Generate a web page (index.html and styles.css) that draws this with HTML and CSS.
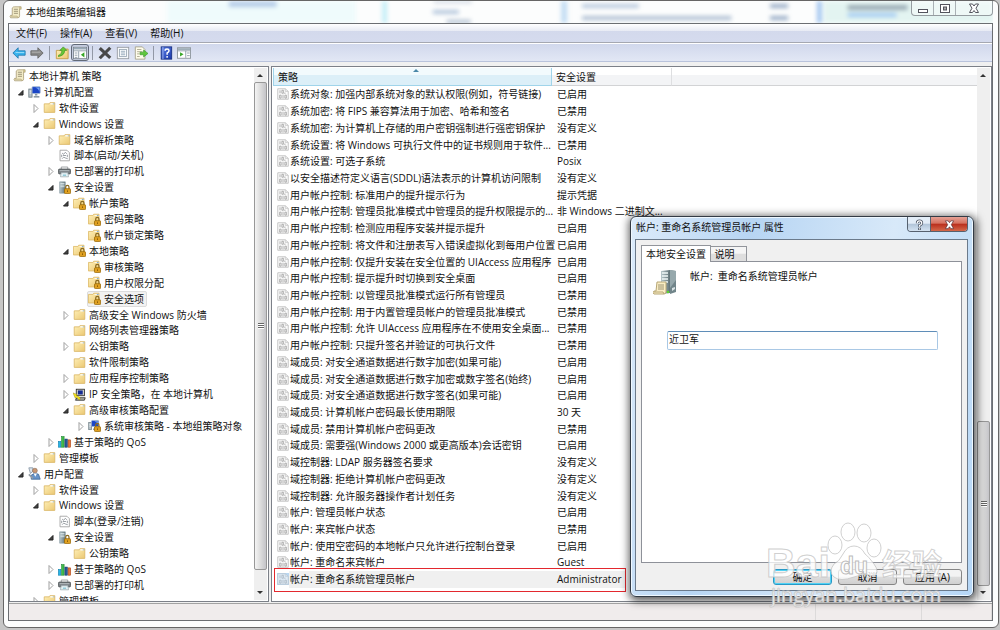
FILE: index.html
```html
<!DOCTYPE html>
<html lang="zh-CN">
<head>
<meta charset="utf-8">
<title>本地组策略编辑器</title>
<link rel="stylesheet" href="styles.css">
</head>
<body>
<svg class="defs" aria-hidden="true">
  <defs>
    <linearGradient id="gold" x1="0" y1="0" x2="1" y2="1"><stop offset="0" stop-color="#fff0b8"/><stop offset="1" stop-color="#ebc873"/></linearGradient>
    <linearGradient id="steel" x1="0" y1="0" x2="1" y2="0"><stop offset="0" stop-color="#b9c8cc"/><stop offset="1" stop-color="#5f7176"/></linearGradient>
    <linearGradient id="help" x1="0" y1="0" x2="1" y2="1"><stop offset="0" stop-color="#5a80e8"/><stop offset="1" stop-color="#1c38a8"/></linearGradient>
  </defs>
  <symbol id="folder" viewBox="0 0 16 16"><path d="M1.500 3.500H7.500L8.500 2H14.500V14H1.500Z" fill="url(#gold)" stroke="#d9b565"/><path d="M9 3.500h4" stroke="#fff" stroke-width="1.500"/><path d="M12 3.500h2" stroke="#8ab4d8"/></symbol>
  <symbol id="lock" viewBox="0 0 16 16"><path d="M9.500 10V7.500a2 2 0 0 1 4 0V10" fill="none" stroke="#8a6a20" stroke-width="1.500"/><rect x="8" y="9.500" width="7.500" height="6" rx="1" fill="#e0a020" stroke="#9a6a08"/><path d="M11.700 11.500v2" stroke="#7a5000"/></symbol>
  <symbol id="folderlock" viewBox="0 0 16 16"><path d="M.500 3H6L7 1.500H13.500V13.500H.500Z" fill="url(#gold)" stroke="#dcb764"/><path d="M8 3h5" stroke="#fff"/><path d="M11 3h2" stroke="#5c9ad8"/><use href="#lock" width="16" height="16"/></symbol>
  <symbol id="scroll" viewBox="0 0 16 16"><path d="M4 2.500Q5 .800 7 1H14Q12.500 2.500 13 5V12Q13 14.500 11 14.500H2Q.500 13 2 11.500H4Z" fill="#f3ecc8" stroke="#a99d77"/><path d="M6 4h5M6 6.500h5M6 9h5" stroke="#8c8468"/><path d="M2 12.500h8l1 2" fill="none" stroke="#b8a977"/><path d="M13 1h2v3h-2" fill="#d9c98c" stroke="#a99d77" stroke-width=".7"/></symbol>
  <symbol id="pc" viewBox="0 0 16 16"><rect x="1" y="5" width="4" height="10" fill="#b7c3c9" stroke="#6d7c84"/><path d="M2 7.500h2M2 10h2" stroke="#fff"/><rect x="5" y="2" width="10" height="8.500" rx="1" fill="#1b45c6" stroke="#a5b9d2"/><path d="M9 3q4 1 5 5v-5z" fill="#77a7f4"/><path d="M10 11v2" stroke="#8b99a4" stroke-width="3"/><path d="M7 14.500h7" stroke="#8b99a4" stroke-width="2"/></symbol>
  <symbol id="pclock" viewBox="0 0 16 16"><use href="#pc" width="14" height="14"/><use href="#lock" width="16" height="16"/></symbol>
  <symbol id="script" viewBox="0 0 16 16"><path d="M2.500 1.500H11L14 4.500V14.500H2.500Z" fill="#fff" stroke="#9a9a9a"/><path d="M5 5l2 1.500L9 4l2 2M5 12l2-2 2 1 3 1M6 8h4M4.500 7v3M11.500 7v3" fill="none" stroke="#868d92"/></symbol>
  <symbol id="printer" viewBox="0 0 16 16"><path d="M4 5V2.500h8V5" fill="#fff" stroke="#8b8f92"/><rect x=".5" y="5" width="15" height="6" rx="1.500" fill="#777e82" stroke="#4b5053"/><path d="M2 7h12" stroke="#c8ced0"/><path d="M4 9.500h8l1 5H3z" fill="#e8f5f8" stroke="#a3b0b4"/><path d="M6 12.500h4" stroke="#4da8bc"/></symbol>
  <symbol id="server" viewBox="0 0 16 16"><path d="M2 1h7v14H2z" fill="url(#steel)" stroke="#82959b" stroke-width=".7"/><path d="M3 3h5M3 5h5M3 7h5" stroke="#e4f0f3"/><use href="#lock" width="16" height="16"/></symbol>
  <symbol id="ipsec" viewBox="0 0 16 16"><rect x="4" y="1.500" width="10" height="8" fill="#d5d5cb" stroke="#222"/><rect x="6" y="3" width="6" height="5" fill="#142b94"/><path d="M5 12h10l-1 3H3z" fill="#b8b8b0" stroke="#222"/><path d="M0 6l5 2-1 1 5 3-1 3-4-4-1 2z" fill="#f8e71e" stroke="#85780c" stroke-width=".5"/></symbol>
  <symbol id="chart" viewBox="0 0 16 16"><rect x=".5" y="8" width="3" height="7" fill="#29b5e8" stroke="#087aa8" stroke-width=".7"/><rect x="4.500" y="2" width="3" height="13" fill="#40bd4a" stroke="#16802a" stroke-width=".7"/><rect x="8.500" y="5" width="3" height="10" fill="#275b9b" stroke="#12325f" stroke-width=".7"/><rect x="12.500" y="6" width="3" height="9" fill="#ea793a" stroke="#a83d0e" stroke-width=".7"/></symbol>
  <symbol id="user" viewBox="0 0 16 16"><path d="M1 1h5v4L3 8z" fill="#dde6ee" stroke="#8392a2"/><circle cx="8.500" cy="4.500" r="3" fill="#c99873" stroke="#775a48" stroke-width=".6"/><path d="M4 15V10q4-4 9-1l2 6z" fill="#6794c9" stroke="#436a96"/><path d="M7 8l2 4 2-4" fill="#fff"/><path d="M1 9l5 5" stroke="#929ba3" stroke-width="2"/></symbol>
  <symbol id="policy" viewBox="0 0 16 16"><path d="M1 1H11L15 4.500V15H1Z" fill="#fbfbfb" stroke="#b4b4b4"/><path d="M11 1V4.500h4" fill="none" stroke="#c2c2c2"/><path d="M4 3v4M6.500 3h2v4h-2zM3.500 9.500h2v4h-2zM8 9v5M10.500 6v2M10.500 9.500h2v4h-2z" fill="none" stroke="#999"/></symbol>
  <symbol id="closed" viewBox="0 0 12 12"><path d="M4 2.500L8 6.500 4 10.500Z" fill="#fff" stroke="#a0a0a0"/></symbol>
  <symbol id="open" viewBox="0 0 12 12"><path d="M8 4.500V9H3.500Z" fill="#444" stroke="#222"/></symbol>
</svg>

<main class="window">
  <header class="titlebar">
    <svg class="glass" viewBox="0 0 990 22" preserveAspectRatio="none" aria-hidden="true">
      <g class="haze">
        <rect x="160" y="0" width="190" height="22" fill="#effbfc"/><rect x="222" y="0" width="48" height="6" fill="#b6cde8"/>
        <rect x="376" y="0" width="5" height="22" fill="#c4eef7"/><rect x="427" y="9" width="26" height="4" fill="#b3c6dc"/><rect x="428" y="0" width="38" height="2" fill="#c2cbda"/><rect x="441" y="19" width="24" height="3" fill="#a9b8cc"/>
        <rect x="556" y="0" width="6" height="22" fill="#c2dcf3"/><rect x="577" y="3" width="57" height="4" fill="#b8c9de"/><rect x="577" y="15" width="150" height="4" fill="#aebfd3"/>
        <rect x="766" y="3" width="18" height="4" fill="#97abc6"/><rect x="766" y="15" width="18" height="4" fill="#97abc6"/>
        <rect x="820" y="0" width="170" height="22" fill="#e3f4f1"/><rect x="813" y="0" width="5" height="22" fill="#a5c7f0"/><rect x="844" y="4" width="60" height="5" fill="#9aabb5"/><rect x="844" y="12" width="49" height="4" fill="#a3cbf3"/>
      </g>
    </svg>
    <svg class="icon"><use href="#scroll"/></svg>
    <h1>本地组策略编辑器</h1>
    <div class="window-buttons">
      <button aria-label="最小化"><svg viewBox="0 0 12 12"><rect x="1.500" y="7.500" width="9" height="3" fill="#fff" stroke="#53545d"/></svg></button>
      <button aria-label="最大化"><svg viewBox="0 0 12 12"><rect x="1.500" y="2.500" width="9" height="8" fill="#fff" stroke="#53545d"/><rect x="4.500" y="5" width="3" height="3" fill="#aaa" stroke="#53545d"/></svg></button>
      <button class="wide" aria-label="关闭"><svg viewBox="0 0 12 12"><path d="M1.500 2h3L6 4 7.500 2h3L8 6.200 10.500 10.500h-3L6 8.500l-1.500 2h-3L4 6.200Z" fill="#fff" stroke="#53545d"/></svg></button>
    </div>
  </header>

  <div class="client">
    <nav class="menubar">
      <button>文件(F)</button><button>操作(A)</button><button>查看(V)</button><button>帮助(H)</button>
    </nav>
    <div class="toolbar" role="toolbar">
      <button aria-label="后退"><svg viewBox="0 0 16 16"><path d="M1 8L7 2V5.500H15V10.500H7V14Z" fill="#38b2ee" stroke="#277baf"/><path d="M4 7.500h10" stroke="#a5e2fc"/></svg></button>
      <button aria-label="前进"><svg viewBox="0 0 16 16"><path d="M15 8L9 2V5.500H1V10.500H9V14Z" fill="#888" stroke="#676767"/><path d="M2 7h10" stroke="#bbb"/></svg></button>
      <i></i>
      <button aria-label="上一级"><svg viewBox="0 0 16 16"><path d="M1.500 5h5l1-1.500H15V14.500H1.500Z" fill="url(#gold)" stroke="#c59c45"/><path d="M3.500 11Q8 10 8 5H5.500L9.500 1l4 4H11Q11 11 3.500 12" fill="#65c837" stroke="#3e9420" stroke-width=".8"/></svg></button>
      <button class="pressed" aria-label="显示/隐藏控制台树" aria-pressed="true"><svg viewBox="0 0 16 16"><rect x=".5" y="1.500" width="15" height="13" fill="#fff" stroke="#7b858e"/><path d="M1 3h14" stroke="#9aabb9" stroke-width="2"/><path d="M1 5.500h14M6.500 6v8M2 8h3M2 10.500h3M2 13h3" stroke="#8796a4"/><path d="M13 7v6L9 10z" fill="#36a626"/></svg></button>
      <i></i>
      <button aria-label="删除"><svg viewBox="0 0 16 16"><path d="M2 2.500L14 13.500M14 2L2 14" stroke="#484848" stroke-width="3.600"/></svg></button>
      <button aria-label="属性"><svg viewBox="0 0 16 16"><rect x="1.500" y="1.500" width="13" height="13" fill="#f7f9fb" stroke="#969ba1"/><rect x="4" y="4" width="8" height="8" fill="#fff" stroke="#9daab7"/><path d="M5.500 6h5M5.500 8h5M5.500 10h5" stroke="#8ba1b4"/></svg></button>
      <button aria-label="导出列表"><svg viewBox="0 0 16 16"><path d="M1.500 1h8l3 3v11h-11z" fill="#fffdeb" stroke="#a5a18a"/><path d="M3.500 4h5M3.500 6.500h6M3.500 9h3M3.500 12h3" stroke="#aaa68f"/><path d="M7 7h4V4.500L16 8.500l-5 4V10H7z" fill="#5fc83c" stroke="#37952a" stroke-width=".7"/></svg></button>
      <i></i>
      <button aria-label="帮助"><svg viewBox="0 0 16 16"><rect x="2.500" y="1" width="12" height="14" fill="url(#help)" stroke="#162e82"/><path d="M4.500 1v14" stroke="#a6b7ee"/><path d="M7 5.500q0-2 2.200-2T11.500 5.500Q11.500 7 9.300 8v2" fill="none" stroke="#fff" stroke-width="1.700"/><rect x="8.400" y="11.500" width="1.800" height="1.800" fill="#fff"/></svg></button>
      <button aria-label="显示/隐藏操作窗格"><svg viewBox="0 0 16 16"><rect x=".5" y="2" width="15" height="12" fill="#fff" stroke="#8a9298"/><path d="M1 3.500h14" stroke="#9aaab5" stroke-width="2"/><path d="M10 5.500v8M1 5.500h14M11.500 8h3M11.500 11h3" stroke="#8796a4"/><path d="M3.500 7v5L7.500 9.500z" fill="#36a626"/></svg></button>
    </div>

    <div class="panes">
      <section class="pane tree-pane">
        <ul class="tree">
          <li class="root"><svg class="icon"><use href="#scroll"/></svg>本地计算机 策略</li>
          <li class="l1"><svg class="arrow"><use href="#open"/></svg><svg class="icon"><use href="#pc"/></svg>计算机配置</li>
          <li class="l2"><svg class="arrow"><use href="#closed"/></svg><svg class="icon"><use href="#folder"/></svg>软件设置</li>
          <li class="l2"><svg class="arrow"><use href="#open"/></svg><svg class="icon"><use href="#folder"/></svg>Windows 设置</li>
          <li class="l3"><svg class="arrow"><use href="#closed"/></svg><svg class="icon"><use href="#folder"/></svg>域名解析策略</li>
          <li class="l3"><svg class="arrow"></svg><svg class="icon"><use href="#script"/></svg>脚本(启动/关机)</li>
          <li class="l3"><svg class="arrow"><use href="#closed"/></svg><svg class="icon"><use href="#printer"/></svg>已部署的打印机</li>
          <li class="l3"><svg class="arrow"><use href="#open"/></svg><svg class="icon"><use href="#server"/></svg>安全设置</li>
          <li class="l4"><svg class="arrow"><use href="#open"/></svg><svg class="icon"><use href="#folderlock"/></svg>帐户策略</li>
          <li class="l5"><svg class="arrow"></svg><svg class="icon"><use href="#folderlock"/></svg>密码策略</li>
          <li class="l5"><svg class="arrow"></svg><svg class="icon"><use href="#folderlock"/></svg>帐户锁定策略</li>
          <li class="l4"><svg class="arrow"><use href="#open"/></svg><svg class="icon"><use href="#folderlock"/></svg>本地策略</li>
          <li class="l5"><svg class="arrow"></svg><svg class="icon"><use href="#folderlock"/></svg>审核策略</li>
          <li class="l5"><svg class="arrow"></svg><svg class="icon"><use href="#folderlock"/></svg>用户权限分配</li>
          <li class="l5"><svg class="arrow"></svg><span class="selected"><svg class="icon"><use href="#folderlock"/></svg>安全选项</span></li>
          <li class="l4"><svg class="arrow"><use href="#closed"/></svg><svg class="icon"><use href="#folder"/></svg>高级安全 Windows 防火墙</li>
          <li class="l4"><svg class="arrow"></svg><svg class="icon"><use href="#folder"/></svg>网络列表管理器策略</li>
          <li class="l4"><svg class="arrow"><use href="#closed"/></svg><svg class="icon"><use href="#folder"/></svg>公钥策略</li>
          <li class="l4"><svg class="arrow"></svg><svg class="icon"><use href="#folder"/></svg>软件限制策略</li>
          <li class="l4"><svg class="arrow"><use href="#closed"/></svg><svg class="icon"><use href="#folder"/></svg>应用程序控制策略</li>
          <li class="l4"><svg class="arrow"><use href="#closed"/></svg><svg class="icon"><use href="#ipsec"/></svg>IP 安全策略，在 本地计算机</li>
          <li class="l4"><svg class="arrow"><use href="#open"/></svg><svg class="icon"><use href="#folder"/></svg>高级审核策略配置</li>
          <li class="l5"><svg class="arrow"><use href="#closed"/></svg><svg class="icon"><use href="#pclock"/></svg>系统审核策略 - 本地组策略对象</li>
          <li class="l3"><svg class="arrow"><use href="#closed"/></svg><svg class="icon"><use href="#chart"/></svg>基于策略的 QoS</li>
          <li class="l2"><svg class="arrow"><use href="#closed"/></svg><svg class="icon"><use href="#folder"/></svg>管理模板</li>
          <li class="l1"><svg class="arrow"><use href="#open"/></svg><svg class="icon"><use href="#user"/></svg>用户配置</li>
          <li class="l2"><svg class="arrow"><use href="#closed"/></svg><svg class="icon"><use href="#folder"/></svg>软件设置</li>
          <li class="l2"><svg class="arrow"><use href="#open"/></svg><svg class="icon"><use href="#folder"/></svg>Windows 设置</li>
          <li class="l3"><svg class="arrow"></svg><svg class="icon"><use href="#script"/></svg>脚本(登录/注销)</li>
          <li class="l3"><svg class="arrow"><use href="#open"/></svg><svg class="icon"><use href="#server"/></svg>安全设置</li>
          <li class="l4"><svg class="arrow"></svg><svg class="icon"><use href="#folder"/></svg>公钥策略</li>
          <li class="l3"><svg class="arrow"><use href="#closed"/></svg><svg class="icon"><use href="#chart"/></svg>基于策略的 QoS</li>
          <li class="l3"><svg class="arrow"><use href="#closed"/></svg><svg class="icon"><use href="#printer"/></svg>已部署的打印机</li>
          <li class="l2"><svg class="arrow"><use href="#closed"/></svg><svg class="icon"><use href="#folder"/></svg>管理模板</li>
        </ul>
        <div class="scrollbar">
          <svg class="scroll-arrow" viewBox="0 0 12 14"><path d="M3 9L6 6L9 9Z" fill="#333"/></svg>
          <div class="thumb tree-thumb"><b></b></div>
          <svg class="scroll-arrow" viewBox="0 0 12 14"><path d="M3 5L6 8L9 5Z" fill="#333"/></svg>
        </div>
      </section>

      <section class="pane list-pane">
        <div class="list">
          <table>
            <colgroup><col class="c-name"><col class="c-value"><col></colgroup>
            <thead><tr><th class="sorted">策略<svg class="sort" viewBox="0 0 8 4"><path d="M0 4L4 0L8 4Z" fill="#4a87a8"/></svg></th><th>安全设置</th><th></th></tr></thead>
            <tbody>
              <tr><td><svg><use href="#policy"/></svg>系统对象: 加强内部系统对象的默认权限(例如，符号链接)</td><td>已启用</td><td></td></tr>
              <tr><td><svg><use href="#policy"/></svg>系统加密: 将 FIPS 兼容算法用于加密、哈希和签名</td><td>已禁用</td><td></td></tr>
              <tr><td><svg><use href="#policy"/></svg>系统加密: 为计算机上存储的用户密钥强制进行强密钥保护</td><td>没有定义</td><td></td></tr>
              <tr><td><svg><use href="#policy"/></svg>系统设置: 将 Windows 可执行文件中的证书规则用于软件...</td><td>已禁用</td><td></td></tr>
              <tr><td><svg><use href="#policy"/></svg>系统设置: 可选子系统</td><td>Posix</td><td></td></tr>
              <tr><td><svg><use href="#policy"/></svg>以安全描述符定义语言(SDDL)语法表示的计算机访问限制</td><td>没有定义</td><td></td></tr>
              <tr><td><svg><use href="#policy"/></svg>用户帐户控制: 标准用户的提升提示行为</td><td>提示凭据</td><td></td></tr>
              <tr><td><svg><use href="#policy"/></svg>用户帐户控制: 管理员批准模式中管理员的提升权限提示的...</td><td>非 Windows 二进制文...</td><td></td></tr>
              <tr><td><svg><use href="#policy"/></svg>用户帐户控制: 检测应用程序安装并提示提升</td><td>已启用</td><td></td></tr>
              <tr><td><svg><use href="#policy"/></svg>用户帐户控制: 将文件和注册表写入错误虚拟化到每用户位置</td><td>已启用</td><td></td></tr>
              <tr><td><svg><use href="#policy"/></svg>用户帐户控制: 仅提升安装在安全位置的 UIAccess 应用程序</td><td>已启用</td><td></td></tr>
              <tr><td><svg><use href="#policy"/></svg>用户帐户控制: 提示提升时切换到安全桌面</td><td>已启用</td><td></td></tr>
              <tr><td><svg><use href="#policy"/></svg>用户帐户控制: 以管理员批准模式运行所有管理员</td><td>已禁用</td><td></td></tr>
              <tr><td><svg><use href="#policy"/></svg>用户帐户控制: 用于内置管理员帐户的管理员批准模式</td><td>已禁用</td><td></td></tr>
              <tr><td><svg><use href="#policy"/></svg>用户帐户控制: 允许 UIAccess 应用程序在不使用安全桌面...</td><td>已禁用</td><td></td></tr>
              <tr><td><svg><use href="#policy"/></svg>用户帐户控制: 只提升签名并验证的可执行文件</td><td>已禁用</td><td></td></tr>
              <tr><td><svg><use href="#policy"/></svg>域成员: 对安全通道数据进行数字加密(如果可能)</td><td>已启用</td><td></td></tr>
              <tr><td><svg><use href="#policy"/></svg>域成员: 对安全通道数据进行数字加密或数字签名(始终)</td><td>已启用</td><td></td></tr>
              <tr><td><svg><use href="#policy"/></svg>域成员: 对安全通道数据进行数字签名(如果可能)</td><td>已启用</td><td></td></tr>
              <tr><td><svg><use href="#policy"/></svg>域成员: 计算机帐户密码最长使用期限</td><td>30 天</td><td></td></tr>
              <tr><td><svg><use href="#policy"/></svg>域成员: 禁用计算机帐户密码更改</td><td>已禁用</td><td></td></tr>
              <tr><td><svg><use href="#policy"/></svg>域成员: 需要强(Windows 2000 或更高版本)会话密钥</td><td>已启用</td><td></td></tr>
              <tr><td><svg><use href="#policy"/></svg>域控制器: LDAP 服务器签名要求</td><td>没有定义</td><td></td></tr>
              <tr><td><svg><use href="#policy"/></svg>域控制器: 拒绝计算机帐户密码更改</td><td>没有定义</td><td></td></tr>
              <tr><td><svg><use href="#policy"/></svg>域控制器: 允许服务器操作者计划任务</td><td>没有定义</td><td></td></tr>
              <tr><td><svg><use href="#policy"/></svg>帐户: 管理员帐户状态</td><td>已启用</td><td></td></tr>
              <tr><td><svg><use href="#policy"/></svg>帐户: 来宾帐户状态</td><td>已禁用</td><td></td></tr>
              <tr><td><svg><use href="#policy"/></svg>帐户: 使用空密码的本地帐户只允许进行控制台登录</td><td>已启用</td><td></td></tr>
              <tr><td><svg><use href="#policy"/></svg>帐户: 重命名来宾帐户</td><td>Guest</td><td></td></tr>
              <tr class="current"><td><svg><use href="#policy"/></svg>帐户: 重命名系统管理员帐户</td><td>Administrator</td><td></td></tr>
            </tbody>
          </table>
          <div class="callout"></div>
        </div>
        <div class="scrollbar">
          <svg class="scroll-arrow" viewBox="0 0 12 14"><path d="M3 9L6 6L9 9Z" fill="#333"/></svg>
          <div class="thumb list-thumb"><b></b></div>
          <svg class="scroll-arrow" viewBox="0 0 12 14"><path d="M3 5L6 8L9 5Z" fill="#333"/></svg>
        </div>
      </section>
    </div>
    <footer class="statusbar"><span></span><span></span><span></span></footer>
  </div>
</main>

<section class="dialog" role="dialog" aria-labelledby="dlg-title">
  <header class="dialog-title">
    <h2 id="dlg-title">帐户: 重命名系统管理员帐户 属性</h2>
    <div class="dialog-buttons">
      <button aria-label="帮助"><svg viewBox="0 0 12 12"><path d="M3.500 4.500Q3.500 2 6 2T8.500 4.500Q8.500 6 6 7V8.500" fill="none" stroke="#4c5563" stroke-width="3"/><path d="M6 9.500v2.500" stroke="#4c5563" stroke-width="3"/><path d="M3.500 4.500Q3.500 2 6 2T8.500 4.500Q8.500 6 6 7V8.500M6 10v1.500" fill="none" stroke="#fff" stroke-width="1.300"/></svg></button>
      <button class="close" aria-label="关闭"><svg viewBox="0 0 12 12"><path d="M1.500 2h3L6 4 7.500 2h3L8 6.200 10.500 10.500h-3L6 8.500l-1.500 2h-3L4 6.200Z" fill="#fff" stroke="#5c3036" stroke-width=".8"/></svg></button>
    </div>
  </header>
  <div class="dialog-client">
    <div class="tabs" role="tablist">
      <button class="active" role="tab" aria-selected="true">本地安全设置</button><button role="tab" aria-selected="false">说明</button>
    </div>
    <div class="panel" role="tabpanel">
      <div class="policy-name">
        <svg viewBox="0 0 24 26" aria-hidden="true"><path d="M8 1l9-1v23l-9 1z" fill="url(#steel)"/><path d="M17 0l6 1v21l-6 2z" fill="#71858a"/><path d="M17 0l6 1v9l-6 8z" fill="#96a8ac"/><path d="M9 3h6M9 6h6M9 9h6M9 12h6" stroke="#eff7f8" stroke-width="1.500"/><path d="M19 18l3-1v2l-3 2z" fill="#d8e2e4"/><circle cx="15" cy="22" r="1.300" fill="#59d530"/><path d="M4 12h9v10q0 2-2 2H1q-2-1 0-3h2z" fill="#faedc3" stroke="#b6a675"/><path d="M5 15h6M5 17h6M5 19h6" stroke="#9d9474"/><path d="M1 22h9l1 2" fill="none" stroke="#b6a675"/></svg>
        <label for="account-name">帐户:&nbsp; 重命名系统管理员帐户</label>
      </div>
      <input id="account-name" type="text" value="近卫军">
    </div>
    <div class="actions"><button class="default">确定</button><button>取消</button><button>应用 (A)</button></div>
  </div>
</section>

<svg class="watermark" viewBox="0 0 184 92" role="img" aria-label="Baidu 经验">
  <g class="mark">
    <ellipse cx="68" cy="28" rx="7" ry="9"/><ellipse cx="81" cy="15" rx="7" ry="9"/><ellipse cx="97" cy="16" rx="7" ry="9"/><ellipse cx="107" cy="31" rx="7" ry="9"/>
    <path d="M87 29Q80 29 76 37T67 47Q61 55 67 60T87 60T107 60Q113 55 107 47T98 37Q94 29 87 29Z"/>
    <text class="latin" x="-1" y="60">Bai</text><text class="cjk" x="115" y="58">经验</text>
    <text class="url" x="4" y="85">jingyan.baidu.com</text>
  </g>
  <text class="du" x="73" y="57">du</text>
</svg>
</body>
</html>
```

FILE: styles.css
```css
* { box-sizing: border-box; }
html, body { height: 100%; margin: 0; }
body {
  position: relative;
  overflow: hidden;
  padding: 0 1px 2px 3px;
  background: #c6c6c6;
  color: #111;
  font: 10px/16px "Open Sans", "Noto Sans CJK SC", sans-serif;
}
button, input { font: inherit; color: inherit; margin: 0; padding: 0; }
button { border: 0; background: none; white-space: nowrap; }
h1, h2 { margin: 0; font: inherit; white-space: nowrap; }
svg { flex: none; }
.defs { position: absolute; width: 0; height: 0; }
.icon { width: 13px; height: 13px; }

.window {
  display: flex;
  flex-direction: column;
  height: 100%;
  padding: 0 5px 6px 4px;
  background: #fcfdfd;
  border: 1px solid #666;
  border-radius: 6px;
}
.titlebar {
  position: relative;
  display: flex;
  align-items: center;
  gap: 4px;
  flex: none;
  height: 22px;
  padding-left: 1px;
}
.titlebar h1, .titlebar .icon, .window-buttons { position: relative; }
.glass { position: absolute; inset: 0; width: 100%; height: 100%; overflow: hidden; }
.haze { filter: blur(2px); }
.window-buttons {
  display: flex;
  align-self: flex-start;
  height: 15px;
  margin-left: auto;
  border: 1px solid #959ca0;
  border-top: 0;
  border-radius: 0 0 4px 4px;
  background: rgba(255, 255, 255, .4);
}
.window-buttons button { display: grid; place-items: center; width: 22px; border-right: 1px solid #a9b0b4; }
.window-buttons .wide { width: 36px; border: 0; }
.window-buttons svg { width: 12px; height: 12px; }

.client {
  display: flex;
  flex: 1;
  flex-direction: column;
  min-height: 0;
  border: 1px solid #6b6e72;
  background: #f0f0f0;
}
.menubar {
  display: flex;
  gap: 13px;
  flex: none;
  height: 19px;
  padding-left: 7px;
  background: linear-gradient(#fff, #e7eaf4 7px, #d3d9ec 7px, #d5dbee);
  border-bottom: 1px solid #a5a8b1;
}
.toolbar {
  display: flex;
  align-items: center;
  gap: 4px;
  flex: none;
  height: 19px;
  padding-left: 3px;
  border-top: 1px solid #fff;
  border-bottom: 1px solid #b9c3dc;
  background: linear-gradient(#d1d8ec, #e2e7f5);
}
.toolbar button { display: grid; place-items: center; width: 14px; height: 16px; }
.toolbar svg { width: 14px; height: 14px; }
.toolbar i { width: 1px; height: 14px; margin: 0 1px; background: #9298a6; }
.toolbar .pressed { width: 18px; height: 17px; margin: 0 -2px; border: 1px solid #626a78; border-radius: 3px; background: #c6cde0; }

.panes { display: flex; flex: 1; gap: 2px; min-height: 0; padding: 4px 0 1px; }
.pane { display: flex; min-width: 0; padding: 1px; border: 1px solid #7c8088; background: #fff; overflow: hidden; }
.tree-pane { flex: 0 0 260px; }
.tree {
  display: flex;
  flex: 1;
  flex-direction: column;
  min-width: 0;
  margin: 0 0 -9px;
  padding: 0;
  list-style: none;
}
.tree li { display: flex; flex: 1; align-items: center; gap: 3px; min-height: 0; white-space: nowrap; }
.arrow { width: 12px; height: 12px; margin-right: -2px; }
.root { padding-left: 2px; }
.l1 { padding-left: 4px; }
.l2 { padding-left: 19px; }
.l3 { padding-left: 34px; }
.l4 { padding-left: 49px; }
.l5 { padding-left: 64px; }
.selected {
  display: flex;
  align-items: center;
  gap: 3px;
  margin-left: -1px;
  padding-right: 2px;
  border: 1px solid #dcdcdc;
  border-radius: 2px;
  background: #f2f2f2;
  line-height: 14px;
}

.scrollbar { display: flex; flex: 0 0 13px; flex-direction: column; background: #efefef; }
.scroll-arrow { width: 12px; height: 14px; }
.thumb {
  display: grid;
  place-items: center;
  border: 1px solid #989898;
  border-radius: 2px;
  background: linear-gradient(90deg, #f4f4f4, #dcdcdc 50%, #c4c4c8);
}
.thumb b { width: 6px; height: 6px; background: repeating-linear-gradient(#666 0 1px, #fff 1px 2px); }
.tree-thumb { flex: 1; margin-bottom: 16px; }
.list-thumb { flex: 0 0 31%; margin-top: auto; }

.list-pane { flex: 1; }
.list { position: relative; flex: 1; min-width: 0; }
table { width: 100%; height: calc(100% - 12px); table-layout: fixed; border-collapse: separate; border-spacing: 0; }
.c-name { width: 279px; }
.c-value { width: 120px; }
th {
  position: relative;
  height: 18px;
  padding: 0 0 0 4px;
  border-right: 1px solid #dedfe1;
  border-bottom: 1px solid #d2d3d5;
  background: linear-gradient(#fff 40%, #f3f4f6 40%);
  font-weight: 400;
  text-align: left;
}
th:last-child { border-right: 0; }
.sorted { border: 1px solid #a0d4ea; border-top: 0; background: linear-gradient(#f2fafd 40%, #dceff8 40%); }
.sort { position: absolute; top: 1px; left: 50%; width: 6px; height: 3px; }
td { height: auto; padding: 1px 0 0 5px; line-height: 15px; white-space: nowrap; }
td svg { width: 12px; height: 12px; margin-right: 1px; vertical-align: -2px; }
td:first-child { padding-left: 4px; }
.current td:first-child { background: linear-gradient(90deg, transparent 16px, #f0f0f0 16px); }
.current td:nth-child(2) { background: linear-gradient(90deg, #f0f0f0 73px, transparent 73px); }
.current svg { background: #b9d7f2; }
.current use { opacity: .6; }
.callout { position: absolute; left: 1px; bottom: 8px; width: 352px; height: 24px; border: 1px solid #e3282e; }

.statusbar { display: flex; flex: none; height: 17px; border-top: 1px solid #a2a2a2; background: #f0ecec; }
.statusbar span { flex: 0 0 70px; border-right: 1px solid #dcdada; }
.statusbar span:first-child { flex: 1; }
.statusbar span:nth-child(2) { flex-basis: 106px; }

.dialog {
  position: absolute;
  left: 630px;
  top: 216px;
  display: flex;
  flex-direction: column;
  width: 344px;
  height: 381px;
  padding: 0 5px 5px 4px;
  border: 1px solid #333b45;
  border-radius: 6px;
  background: linear-gradient(100deg, #dcebfa, #b7d5f3 30%, #d8e9f9 65%, #b5d6f6);
  box-shadow: inset 0 0 0 1px #eff8ff, 1px 2px 9px 2px rgba(0, 0, 0, .65);
}
.dialog-title { display: flex; flex: none; height: 22px; padding-left: 1px; line-height: 20px; }
.dialog-buttons { display: flex; height: 15px; margin-left: auto; border: 1px solid #56616f; border-top: 0; border-radius: 0 0 4px 4px; overflow: hidden; }
.dialog-buttons button { display: grid; place-items: center; width: 22px; background: linear-gradient(#e3edf7 45%, #b1c4d8 50%, #d4e3f1); }
.dialog-buttons .close { width: 37px; border-left: 1px solid #56616f; background: linear-gradient(#e6a296, #d5705e 45%, #b92e1c 50%, #d4684a); }
.dialog-buttons svg { width: 11px; height: 11px; }
.dialog-client { display: flex; flex: 1; flex-direction: column; min-height: 0; padding: 4px 5px 5px; border: 1px solid #6b7a8b; background: #f0f0f0; }
.tabs { display: flex; align-items: flex-end; flex: none; height: 17px; }
.tabs button { width: 36px; height: 15px; padding-right: 8px; border: 1px solid #92959b; border-left: 0; border-bottom: 0; background: linear-gradient(#f5f5f5 45%, #dedede 50%); line-height: 14px; }
.tabs .active { z-index: 1; width: 70px; height: 17px; margin-bottom: -1px; padding: 0; border-left: 1px solid #92959b; background: #fff; }
.panel { flex: 1; padding: 8px 23px 0 25px; border: 1px solid #8e9199; background: #fff; }
.policy-name { display: flex; gap: 13px; height: 61px; margin-left: -14px; line-height: 12px; }
.policy-name svg { width: 24px; height: 26px; }
.panel input { display: block; width: 100%; height: 19px; padding: 0 1px 5px; border: 1px solid #a9c8e5; border-top-color: #5f8db8; border-radius: 2px; background: #fff; outline: 0; }
.actions { display: flex; flex: none; justify-content: flex-end; gap: 6px; padding-top: 6px; }
.actions button { width: 59px; height: 16px; border: 1px solid #858585; border-radius: 3px; background: linear-gradient(#f3f3f3 45%, #dddddd 50%, #d0d0d0); line-height: 12px; }
.actions .default { border-color: #2899c6; box-shadow: inset 0 0 0 1px #50d2f5; }

.watermark { position: absolute; left: 767px; top: 517px; width: 184px; height: 92px; pointer-events: none; }
.mark { fill: #fff; fill-opacity: .75; stroke: #c4c4c4; stroke-opacity: .8; stroke-width: 1; }
.latin { font: 700 41px "Liberation Sans", sans-serif; }
.cjk { font: 700 30px "Noto Sans CJK SC", sans-serif; }
.url { font: 20px "Open Sans", sans-serif; fill-opacity: 1; }
.du { font: 700 23px "Liberation Sans", sans-serif; fill: #fff; stroke: #bcbcbc; stroke-width: 1; }
```
